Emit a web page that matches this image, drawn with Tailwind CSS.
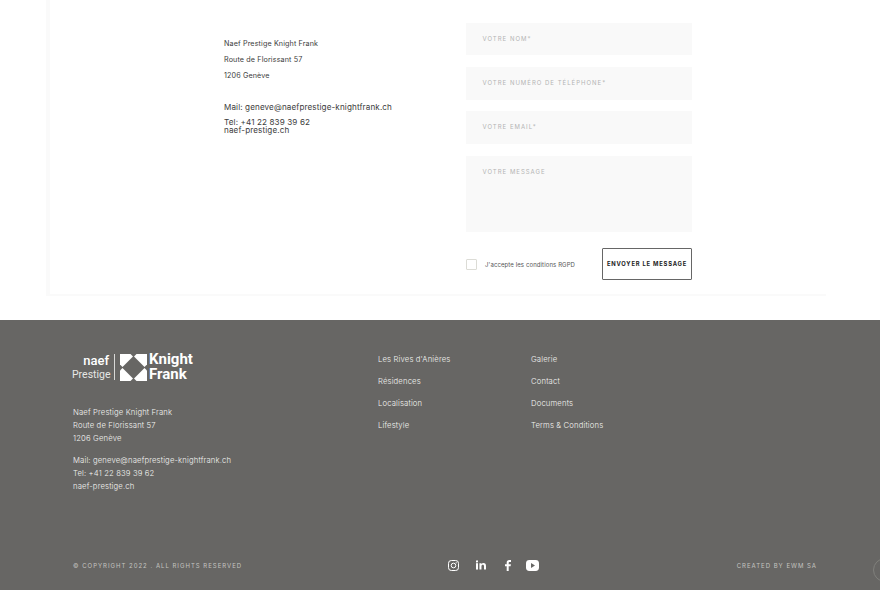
<!DOCTYPE html>
<html lang="fr">
<head>
<meta charset="utf-8">
<script src="https://cdn.jsdelivr.net/npm/@tailwindcss/browser@4"></script>
<title>Contact</title>
</head>
<body class="bg-white font-['Inter','Liberation_Sans',sans-serif] w-[880px] h-[590px] overflow-hidden relative">
<main class="h-[320px] pl-[46px]">
  <div class="w-[780px] h-[296px] border-l-4 border-b-2 border-[#fafafa] flex text-[#3c3c3c]">
    <div class="w-[416px] pl-[174px] pt-[36px]">
      <div class="text-[7.2px] leading-[16px] tracking-[0.12px]">
        <p>Naef Prestige Knight Frank</p>
        <p>Route de Florissant 57</p>
        <p>1206 Genève</p>
      </div>
      <div class="text-[8.1px] mt-[15px] tracking-[0.12px]">
        <p class="leading-[16px]">Mail: geneve@naefprestige-knightfrank.ch</p>
        <p class="leading-[8px] mt-[3px]">Tel: +41 22 839 39 62</p>
        <p class="leading-[9px]">naef-prestige.ch</p>
      </div>
    </div>
    <form class="w-[226px] pt-[23px] flex flex-col">
      <div class="h-[32px] bg-[#f9f9f9] pl-[16.5px] pt-[12px] text-[6px] leading-[8px] tracking-[1px] text-[#b4b4b4]">VOTRE NOM*</div>
      <div class="h-[33px] mt-[12px] bg-[#f9f9f9] pl-[16.5px] pt-[12px] text-[6px] leading-[8px] tracking-[1px] text-[#b4b4b4]">VOTRE NUMÉRO DE TÉLÉPHONE*</div>
      <div class="h-[33px] mt-[11px] bg-[#f9f9f9] pl-[16.5px] pt-[12px] text-[6px] leading-[8px] tracking-[1px] text-[#b4b4b4]">VOTRE EMAIL*</div>
      <div class="h-[76px] mt-[12px] bg-[#f9f9f9] pl-[16.5px] pt-[12px] text-[6px] leading-[8px] tracking-[1px] text-[#b4b4b4]">VOTRE MESSAGE</div>
      <div class="flex items-center mt-[16px] h-[32px]">
        <span class="w-[11px] h-[11px] border border-[#dcdcd6] rounded-[1px]"></span>
        <span class="ml-[8px] text-[6px] text-[#555] tracking-[0.1px]">J'accepte les conditions RGPD</span>
        <span class="ml-auto w-[90px] h-[32px] border border-[#666] rounded-[1px] flex items-center justify-center text-[5.8px] font-bold tracking-[0.8px] text-[#222]">ENVOYER LE MESSAGE</span>
      </div>
    </form>
  </div>
</main>
<footer class="h-[270px] bg-[#676664] text-[#f4f4f2] font-light flex flex-col relative">
  <div class="flex flex-1 pl-[73px]">
    <div class="w-[305px] pt-[32px]">
      <div class="flex items-center h-[30px] -ml-[1px] text-white">
        <div class="w-[37px] text-right font-['Roboto',sans-serif] font-normal">
          <p class="text-[13px] leading-[14px] font-medium">naef</p>
          <p class="text-[10.5px] leading-[13px] text-[#e6e6e4]">Prestige</p>
        </div>
        <span class="w-px h-[26px] bg-[#d8d8d6] ml-[5px]"></span>
        <svg class="ml-[5px]" width="27" height="27" viewBox="0 0 27 27" fill="#fff"><polygon points="0,0 10.5,0 13,2.5 2.5,13 0,10.5"/><polygon points="27,0 16.5,0 14,2.5 24.5,13 27,10.5"/><polygon points="0,27 10.5,27 13,24.5 2.5,14 0,16.5"/><polygon points="27,27 16.5,27 14,24.5 24.5,14 27,16.5"/></svg>
        <div class="ml-[2px] font-['Roboto',sans-serif] font-bold text-[15px]">
          <p class="leading-[15px]">Knight</p>
          <p class="leading-[15px]">Frank</p>
        </div>
      </div>
      <div class="mt-[24px] text-[7.7px] leading-[13px] tracking-[0.15px]">
        <p>Naef Prestige Knight Frank</p>
        <p>Route de Florissant 57</p>
        <p>1206 Genève</p>
      </div>
      <div class="mt-[9px] text-[7.7px] leading-[13px] tracking-[0.15px]">
        <p>Mail: geneve@naefprestige-knightfrank.ch</p>
        <p>Tel: +41 22 839 39 62</p>
        <p>naef-prestige.ch</p>
      </div>
    </div>
    <ul class="w-[153px] pt-[29px] text-[7.7px] leading-[22px] tracking-[0.15px]">
      <li>Les Rives d'Anières</li>
      <li>Résidences</li>
      <li>Localisation</li>
      <li>Lifestyle</li>
    </ul>
    <ul class="pt-[29px] text-[7.7px] leading-[22px] tracking-[0.15px]">
      <li>Galerie</li>
      <li>Contact</li>
      <li>Documents</li>
      <li>Terms &amp; Conditions</li>
    </ul>
  </div>
  <div class="h-[50px] pl-[73px] pr-[63px] flex items-center text-[6px] font-normal tracking-[1px] text-[#c4c4c0] leading-[10px] whitespace-nowrap">
    <span class="w-[375px] pt-[2px]">© COPYRIGHT 2022 . ALL RIGHTS RESERVED</span>
    <div class="flex items-center h-[11px]">
      <svg class="w-[11px] h-[11px]" viewBox="0 0 11 11" fill="none" stroke="#fff" stroke-width="1"><rect x=".5" y=".5" width="10" height="10" rx="2.8"/><circle cx="5.5" cy="5.5" r="2.3"/><circle cx="8.2" cy="2.8" r=".4" fill="#fff" stroke-width=".4"/></svg>
      <svg class="w-[10px] h-[10px] ml-[17px]" viewBox="0 0 11 10" fill="#fff"><rect x="0" y="3" width="2.2" height="7"/><circle cx="1.1" cy="1.1" r="1.2"/><path d="M3.8 3H6V4C6.5 3.2 7.3 2.8 8.2 2.8 10.2 2.8 11 4 11 6V10H8.8V6.4C8.8 5.4 8.4 4.8 7.5 4.8 6.5 4.8 6 5.5 6 6.5V10H3.8Z"/></svg>
      <svg class="w-[6px] h-[11px] ml-[19px]" viewBox="0 0 6 11" fill="#fff"><path d="M1.7 11V6.2H0V4.2H1.7V2.7C1.7 1 2.7 0 4.3 0H6V2H4.8C4 2 3.7 2.4 3.7 3V4.2H5.9L5.6 6.2H3.7V11Z"/></svg>
      <svg class="w-[13px] h-[11px] ml-[15px]" viewBox="0 0 13 11"><rect width="13" height="11" rx="3.4" fill="#fff"/><path d="M5 3V8L9 5.5Z" fill="#676664"/></svg>
    </div>
    <span class="ml-auto pt-[2px]">CREATED BY EWM SA</span>
  </div>
  <span class="absolute left-[873px] top-[238px] w-[24px] h-[24px] rounded-full border border-[#80807c]"></span>
</footer>
</body>
</html>
